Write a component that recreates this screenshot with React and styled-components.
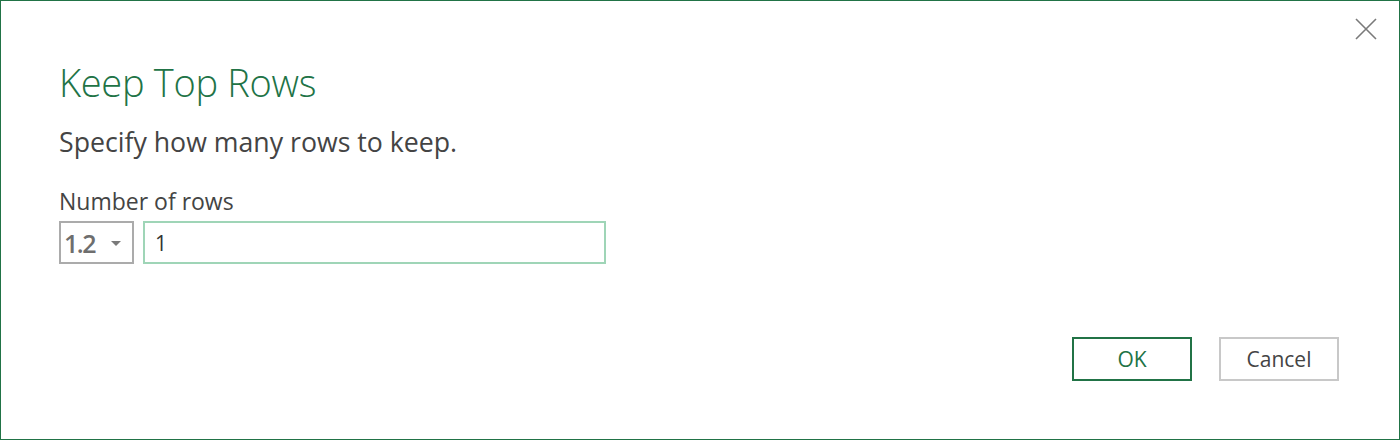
import React, { useState } from 'react';
import styled, { createGlobalStyle } from 'styled-components';

const GlobalStyle = createGlobalStyle`
  html, body {
    margin: 0;
    padding: 0;
    background: #ffffff;
  }
  body {
    font-family: "Open Sans", "Noto Sans", sans-serif;
  }
`;

const Dialog = styled.div`
  box-sizing: border-box;
  width: 1400px;
  height: 440px;
  border: 1px solid #217346;
  background: #fff;
  display: flex;
  flex-direction: column;
  box-shadow: 0 1px 0 #d0d0d0;
`;

const TopBar = styled.div`
  display: flex;
  justify-content: flex-end;
  padding: 16px 21px 0 0;
  height: 24px;
`;

const CloseButton = styled.button`
  width: 24px;
  height: 24px;
  padding: 0;
  border: none;
  background: transparent;
  cursor: pointer;
  display: flex;
  align-items: center;
  justify-content: center;
`;

const Body = styled.div`
  flex: 1;
  display: flex;
  flex-direction: column;
  padding: 0 60px 0 58px;
`;

const Title = styled.h1`
  margin: 16px 0 0 0;
  font-family: "Open Sans", sans-serif;
  font-weight: 300;
  font-size: 38px;
  line-height: 50px;
  color: #217346;
  letter-spacing: -0.3px;
`;

const Subtitle = styled.p`
  margin: 18px 0 0 0;
  font-size: 26.7px;
  line-height: 34px;
  color: #444444;
`;

const Label = styled.div`
  margin: 27px 0 0 0;
  font-size: 23px;
  line-height: 30px;
  color: #444444;
`;

const FieldRow = styled.div`
  display: flex;
  gap: 9px;
  margin-top: 5px;
`;

const TypePicker = styled.div`
  box-sizing: border-box;
  width: 75px;
  height: 43px;
  border: 2px solid #ababab;
  display: flex;
  align-items: center;
  padding-left: 3px;
  gap: 16px;
`;

const TypeText = styled.span`
  font-family: "Open Sans", sans-serif;
  font-size: 25px;
  font-weight: 600;
  color: #6e6e6e;
  letter-spacing: -1.5px;
`;

const Caret = styled.span`
  width: 0;
  height: 0;
  border-left: 5px solid transparent;
  border-right: 5px solid transparent;
  border-top: 5px solid #7a7a7a;
  margin-top: 1px;
`;

const RowsInput = styled.input`
  box-sizing: border-box;
  width: 463px;
  height: 43px;
  border: 2px solid #9fd5b7;
  outline: none;
  padding: 0 10px;
  font-family: "Open Sans", sans-serif;
  font-size: 21px;
  color: #333;
`;

const Footer = styled.div`
  margin-top: auto;
  display: flex;
  justify-content: flex-end;
  gap: 27px;
  padding-bottom: 58px;
`;

const Button = styled.button`
  box-sizing: border-box;
  width: 120px;
  height: 44px;
  background: #fff;
  border: 2px solid ${(p) => (p.$primary ? '#217346' : '#c8c8c8')};
  color: ${(p) => (p.$primary ? '#217346' : '#444444')};
  font-family: "Open Sans", sans-serif;
  font-size: 21px;
  cursor: pointer;
`;

export default function App() {
  const [rows, setRows] = useState('1');
  return (
    <>
      <GlobalStyle />
      <Dialog>
        <TopBar>
          <CloseButton aria-label="Close">
            <svg width="22" height="22" viewBox="0 0 22 22">
              <path d="M1 1 L21 21 M21 1 L1 21" stroke="#7a7a7a" strokeWidth="1.6" fill="none" />
            </svg>
          </CloseButton>
        </TopBar>
        <Body>
          <Title>Keep Top Rows</Title>
          <Subtitle>Specify how many rows to keep.</Subtitle>
          <Label>Number of rows</Label>
          <FieldRow>
            <TypePicker>
              <TypeText>1.2</TypeText>
              <Caret />
            </TypePicker>
            <RowsInput value={rows} onChange={(e) => setRows(e.target.value)} />
          </FieldRow>
          <Footer>
            <Button $primary>OK</Button>
            <Button>Cancel</Button>
          </Footer>
        </Body>
      </Dialog>
    </>
  );
}
